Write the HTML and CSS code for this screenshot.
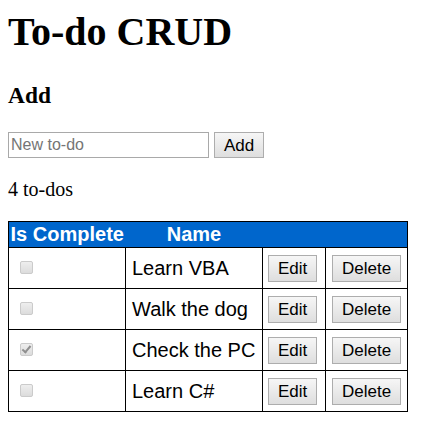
FILE: index.html
```html
<!DOCTYPE html>
<html lang="en">
<head>
<meta charset="utf-8">
<title>To-do CRUD</title>
<link rel="stylesheet" href="styles.css">
</head>
<body>
<h1 class="title">To-do CRUD</h1>
<h3 class="section-title">Add</h3>
<form class="add-form">
  <input class="text-input" type="text" placeholder="New to-do">
  <button class="btn btn-add" type="button">Add</button>
</form>
<p class="count">4 to-dos</p>
<table class="todo-table">
  <thead>
    <tr>
      <th class="col-complete">Is Complete</th>
      <th class="col-name">Name</th>
      <th class="col-edit"></th>
      <th class="col-delete"></th>
    </tr>
  </thead>
  <tbody>
    <tr>
      <td><input class="check" type="checkbox" disabled></td>
      <td class="name-cell">Learn VBA</td>
      <td><button class="btn btn-row" type="button">Edit</button></td>
      <td class="delete-cell"><button class="btn btn-row" type="button">Delete</button></td>
    </tr>
    <tr>
      <td><input class="check" type="checkbox" disabled></td>
      <td class="name-cell">Walk the dog</td>
      <td><button class="btn btn-row" type="button">Edit</button></td>
      <td class="delete-cell"><button class="btn btn-row" type="button">Delete</button></td>
    </tr>
    <tr>
      <td><input class="check" type="checkbox" checked disabled></td>
      <td class="name-cell">Check the PC</td>
      <td><button class="btn btn-row" type="button">Edit</button></td>
      <td class="delete-cell"><button class="btn btn-row" type="button">Delete</button></td>
    </tr>
    <tr>
      <td><input class="check" type="checkbox" disabled></td>
      <td class="name-cell">Learn C#</td>
      <td><button class="btn btn-row" type="button">Edit</button></td>
      <td class="delete-cell"><button class="btn btn-row" type="button">Delete</button></td>
    </tr>
  </tbody>
</table>
</body>
</html>
```

FILE: styles.css
```css
html {
  background: #fff;
}

body {
  margin: 8px;
  font-family: "Liberation Serif", "Times New Roman", serif;
  font-size: 20px;
  color: #000;
}

.title {
  font-size: 40px;
  font-weight: bold;
  margin: 0 0 26.8px;
}

.section-title {
  font-size: 23.4px;
  font-weight: bold;
  margin: 23.4px 0;
}

.add-form {
  display: flex;
  gap: 5px;
  margin: 0;
}

.text-input {
  box-sizing: border-box;
  width: 201px;
  height: 26px;
  margin: 0;
  padding: 1px 2px;
  border: 1px solid #a9a9a9;
  font-family: "Liberation Sans", Arial, sans-serif;
  font-size: 16px;
  color: #000;
  background: #fff;
}

.text-input::placeholder {
  color: #757575;
}

.btn {
  box-sizing: border-box;
  margin: 0;
  padding: 0 9px;
  border: 1px solid #adadad;
  border-radius: 0;
  background: linear-gradient(#f6f6f6, #dedede);
  font-family: "Liberation Sans", Arial, sans-serif;
  font-size: 17px;
  color: #000;
  line-height: 1;
}

.btn-add {
  height: 26px;
}

.btn-row {
  height: 27px;
  vertical-align: middle;
}

.count {
  margin: 20px 0;
}

.todo-table {
  border-collapse: collapse;
  border: 1px solid #000;
  width: 399px;
  table-layout: fixed;
  font-family: "Liberation Sans", Arial, sans-serif;
  font-size: 20px;
}

.todo-table th {
  box-sizing: border-box;
  background: #0066cc;
  color: #fff;
  font-weight: bold;
  padding: 1px;
  text-align: center;
  line-height: 23px;
  white-space: nowrap;
}

.col-complete {
  width: 117px;
}

.col-name {
  width: 137px;
}

.col-edit {
  width: 63px;
}

.col-delete {
  width: 82px;
}

.todo-table td {
  border: 1px solid #000;
  padding: 5px;
  height: 30px;
  vertical-align: middle;
  white-space: nowrap;
}

.todo-table .name-cell {
  padding-left: 6px;
}

.todo-table .delete-cell {
  padding-left: 6px;
}

.check {
  appearance: none;
  -webkit-appearance: none;
  box-sizing: border-box;
  position: relative;
  width: 13px;
  height: 13px;
  margin: 0 3px 4px 6px;
  vertical-align: middle;
  border: 1px solid #cbcbcb;
  border-radius: 2px;
  background: linear-gradient(#eeeeee, #dcdcdc);
}

.check:checked::after {
  content: "";
  position: absolute;
  left: 3px;
  top: 0px;
  width: 3px;
  height: 7px;
  border: solid #8f8f8f;
  border-width: 0 2px 2px 0;
  transform: rotate(40deg);
}
```
